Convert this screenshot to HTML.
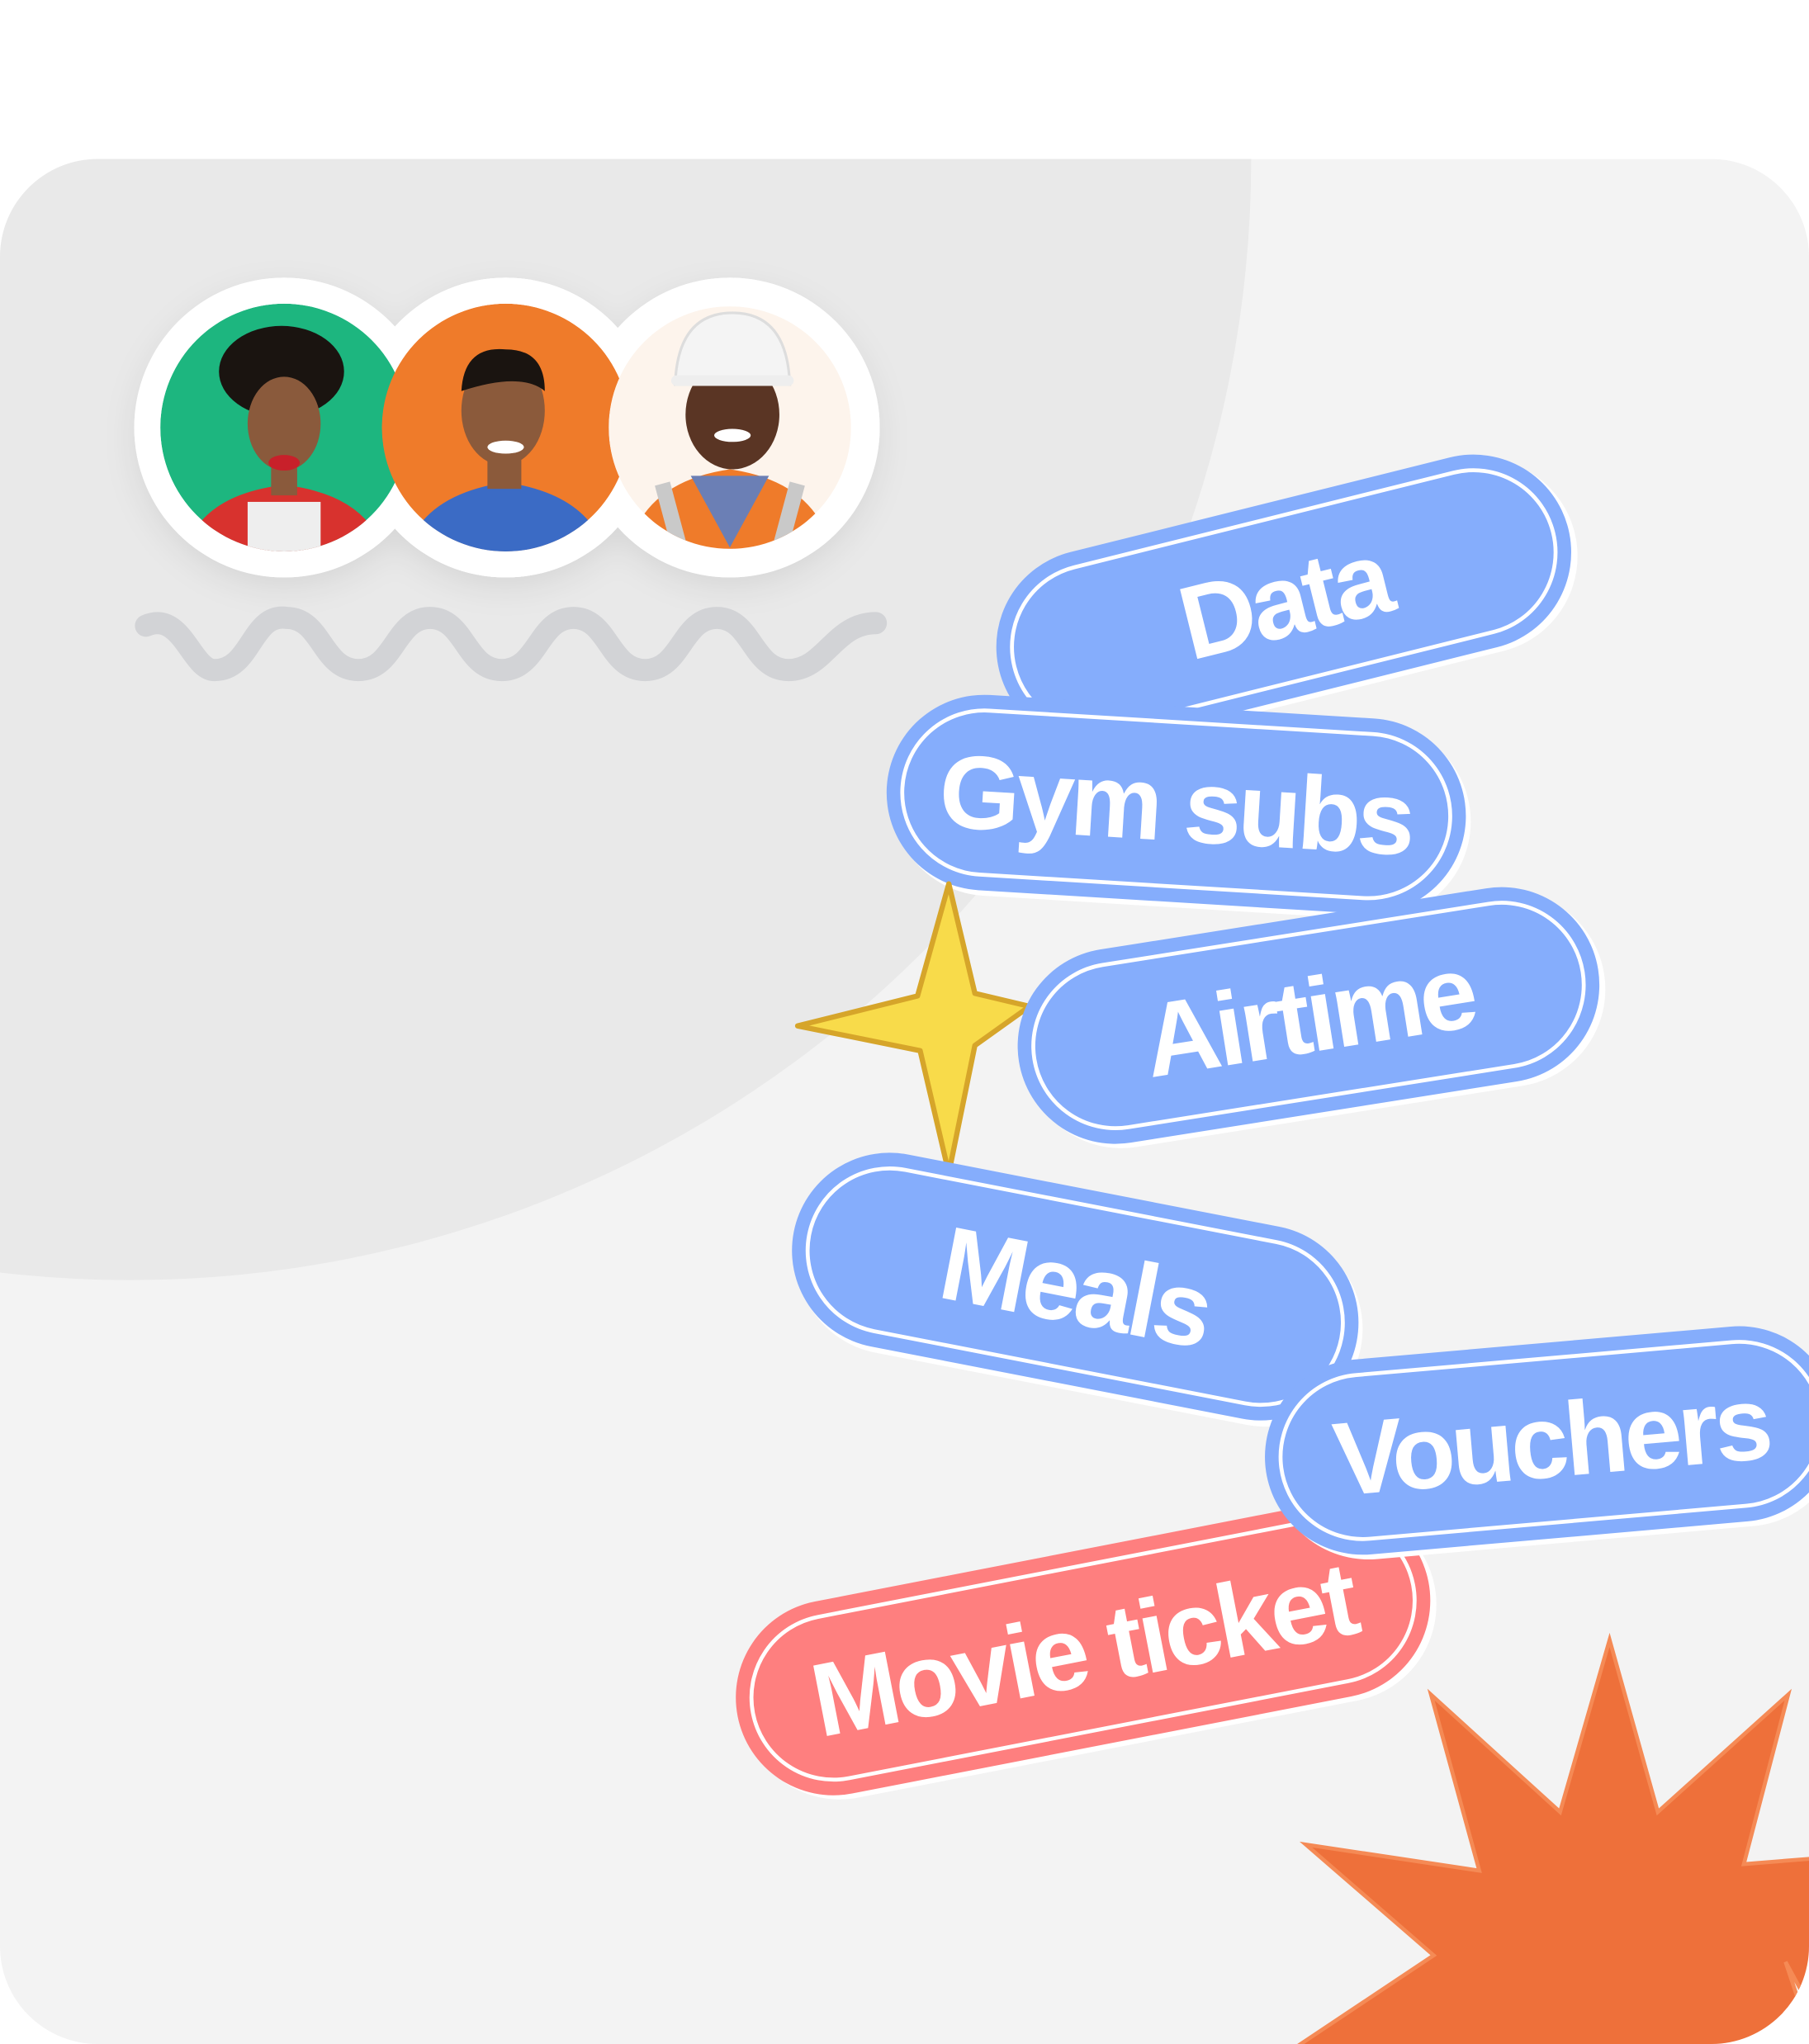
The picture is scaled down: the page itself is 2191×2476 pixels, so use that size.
<!DOCTYPE html>
<html><head><meta charset="utf-8"><style>
html,body{margin:0;padding:0;background:#fff;}
svg{display:block;}
text{font-family:"Liberation Sans",sans-serif;font-weight:bold;fill:#fff;}
</style></head><body>
<svg width="2191" height="2476" viewBox="0 0 1388 1568" preserveAspectRatio="none" xmlns="http://www.w3.org/2000/svg">
<defs>
<clipPath id="card"><rect x="0" y="122" width="1388" height="1446" rx="75"/></clipPath>
<clipPath id="c1"><circle cx="218" cy="328" r="95"/></clipPath>
<clipPath id="c2"><circle cx="388" cy="328" r="95"/></clipPath>
<clipPath id="c3"><circle cx="560" cy="328" r="93"/></clipPath>
<filter id="sh" x="-30%" y="-30%" width="160%" height="160%"><feDropShadow dx="0" dy="8" stdDeviation="12" flood-color="#000" flood-opacity="0.08"/></filter>
</defs>
<rect width="1388" height="1568" fill="#fff"/>
<g clip-path="url(#card)">
<rect x="0" y="122" width="1388" height="1446" fill="#f3f3f3"/>
<circle cx="100" cy="122" r="860" fill="#e9e9e9"/>
<!-- burst -->
<polygon points="1235,1258 1272,1390 1372,1300 1338,1430 1400,1425 1400,1560 1370,1505 1395,1580 980,1580 1100,1500 1002,1415 1135,1435 1098,1300 1197,1390" fill="#ee703a" stroke="#f58a55" stroke-width="3"/>
</g>
<!-- avatars -->
<g filter="url(#sh)">
<circle cx="560" cy="328" r="115" fill="#fff"/>
<circle cx="388" cy="328" r="115" fill="#fff"/>
<circle cx="218" cy="328" r="115" fill="#fff"/>
</g>
<circle cx="388" cy="328" r="115" fill="#fff"/>
<circle cx="560" cy="328" r="115" fill="#fff"/>
<circle cx="218" cy="328" r="115" fill="#fff"/>
<circle cx="388" cy="328" r="115" fill="#fff"/>
<g clip-path="url(#c1)"><circle cx="218" cy="328" r="95" fill="#1db67f"/>
<path d="M140 430 Q150 380 218 372 Q286 380 296 430Z" fill="#d8322e"/>
<rect x="190" y="385" width="56" height="40" fill="#eee"/>
<ellipse cx="216" cy="285" rx="48" ry="35" fill="#1a1410"/>
<ellipse cx="218" cy="325" rx="28" ry="36" fill="#8a5a3c"/>
<rect x="208" y="350" width="20" height="30" fill="#8a5a3c"/>
<ellipse cx="218" cy="355" rx="12" ry="6" fill="#c8202a"/></g>
<g clip-path="url(#c2)"><circle cx="388" cy="328" r="95" fill="#ef7b2a"/>
<path d="M310 430 Q320 380 388 370 Q456 380 466 430Z" fill="#3b6bc5"/>
<ellipse cx="386" cy="315" rx="32" ry="42" fill="#8b5a3b"/>
<path d="M354 300 Q356 265 388 268 Q418 268 418 300 Q400 285 354 300Z" fill="#1a1410"/>
<rect x="374" y="345" width="26" height="30" fill="#8b5a3b"/>
<ellipse cx="388" cy="343" rx="14" ry="5" fill="#fff"/></g>
<g clip-path="url(#c3)"><circle cx="560" cy="328" r="93" fill="#fdf4ec"/>
<path d="M480 430 Q490 370 560 360 Q630 370 640 430Z" fill="#ef7b2a"/>
<path d="M530 365 L560 420 L590 365Z" fill="#6b7fb5"/>
<rect x="510" y="370" width="12" height="60" fill="#c9c9c9" transform="rotate(-15 516 400)"/>
<rect x="598" y="370" width="12" height="60" fill="#c9c9c9" transform="rotate(15 604 400)"/>
<ellipse cx="562" cy="318" rx="36" ry="42" fill="#5a3524"/>
<path d="M518 295 Q520 240 562 240 Q604 240 606 295Z" fill="#f4f4f4" stroke="#ddd" stroke-width="2"/>
<rect x="515" y="288" width="94" height="8" rx="4" fill="#eee"/>
<ellipse cx="562" cy="334" rx="14" ry="5" fill="#fff"/></g>
<!-- wave -->
<path d="M112 480 C140 468 147 515 165 514 C193 514 193 470 220 474 C247 474 247 514 275 514 C303 514 303 474 330 474 C357 474 357 514 385 514 C413 514 413 474 440 474 C467 474 467 514 495 514 C523 514 523 474 550 474 C577 474 577 514 605 514 C633 514 640 478 672 478" fill="none" stroke="#d2d3d6" stroke-width="17" stroke-linecap="round"/>
<!-- Data -->
<g transform="translate(985,460) rotate(-14)">
<rect x="-221" y="-71" width="450" height="150" rx="75" fill="#fff"/>
<rect x="-225" y="-75" width="450" height="150" rx="75" fill="#85adfc"/>
<rect x="-213" y="-63" width="426" height="126" rx="63" fill="none" stroke="#fff" stroke-width="3"/>
<text x="0" y="28" font-size="80" letter-spacing="-3" text-anchor="middle">Data</text></g>
<!-- Gym subs -->
<g transform="translate(902,617) rotate(3.5)">
<rect x="-218" y="-71" width="445" height="150" rx="75" fill="#fff"/>
<rect x="-222" y="-75" width="445" height="150" rx="75" fill="#85adfc"/>
<rect x="-210" y="-63" width="421" height="126" rx="63" fill="none" stroke="#fff" stroke-width="3"/>
<text x="0" y="28" font-size="80" letter-spacing="-3" text-anchor="middle">Gym subs</text></g>
<!-- star -->
<path d="M728 678 L748 762 L790 772 L748 802 L728 900 L706 806 L612 787 L704 764Z" fill="#f8db4a" stroke="#d6a52a" stroke-width="4" stroke-linejoin="round"/>
<!-- Airtime -->
<g transform="translate(1004,779) rotate(-9)">
<rect x="-221" y="-71" width="450" height="150" rx="75" fill="#fff"/>
<rect x="-225" y="-75" width="450" height="150" rx="75" fill="#85adfc"/>
<rect x="-213" y="-63" width="426" height="126" rx="63" fill="none" stroke="#fff" stroke-width="3"/>
<text x="0" y="28" font-size="80" letter-spacing="-3" text-anchor="middle">Airtime</text></g>
<!-- Meals -->
<g transform="translate(825,987) rotate(11)">
<rect x="-216" y="-71" width="440" height="150" rx="75" fill="#fff"/>
<rect x="-220" y="-75" width="440" height="150" rx="75" fill="#85adfc"/>
<rect x="-208" y="-63" width="416" height="126" rx="63" fill="none" stroke="#fff" stroke-width="3"/>
<text x="0" y="28" font-size="80" letter-spacing="-3" text-anchor="middle">Meals</text></g>
<!-- Movie ticket -->
<g transform="translate(831,1265) rotate(-11)">
<rect x="-266" y="-71" width="540" height="150" rx="75" fill="#fff"/>
<rect x="-270" y="-75" width="540" height="150" rx="75" fill="#fe7f7f"/>
<rect x="-258" y="-63" width="516" height="126" rx="63" fill="none" stroke="#fff" stroke-width="3"/>
<text x="0" y="28" font-size="80" letter-spacing="-3" text-anchor="middle">Movie ticket</text></g>
<!-- Vouchers -->
<g clip-path="url(#card)">
<g transform="translate(1190,1105) rotate(-5)">
<rect x="-216" y="-71" width="440" height="150" rx="75" fill="#fff"/>
<rect x="-220" y="-75" width="440" height="150" rx="75" fill="#85adfc"/>
<rect x="-208" y="-63" width="416" height="126" rx="63" fill="none" stroke="#fff" stroke-width="3"/>
<text x="0" y="28" font-size="80" letter-spacing="-3" text-anchor="middle">Vouchers</text></g></g>
</svg>
</body></html>
